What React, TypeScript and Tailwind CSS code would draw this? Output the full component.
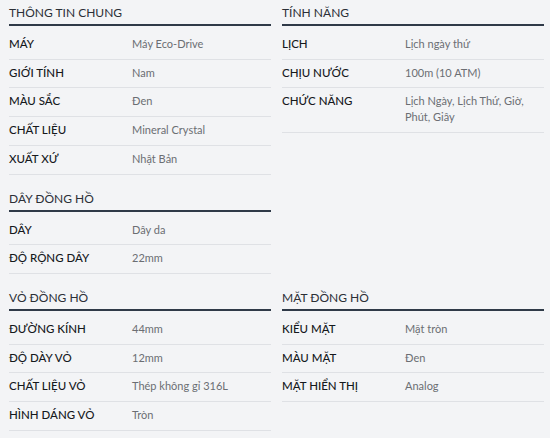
import React from "react";

type Row = { label: string; value: string };
type Section = { title: string; rows: Row[] };

const thongTin: Section = {
  title: "THÔNG TIN CHUNG",
  rows: [
    { label: "MÁY", value: "Máy Eco-Drive" },
    { label: "GIỚI TÍNH", value: "Nam" },
    { label: "MÀU SẮC", value: "Đen" },
    { label: "CHẤT LIỆU", value: "Mineral Crystal" },
    { label: "XUẤT XỨ", value: "Nhật Bản" },
  ],
};

const tinhNang: Section = {
  title: "TÍNH NĂNG",
  rows: [
    { label: "LỊCH", value: "Lịch ngày thứ" },
    { label: "CHỊU NƯỚC", value: "100m (10 ATM)" },
    { label: "CHỨC NĂNG", value: "Lịch Ngày, Lịch Thứ, Giờ, Phút, Giây" },
  ],
};

const dayDongHo: Section = {
  title: "DÂY ĐỒNG HỒ",
  rows: [
    { label: "DÂY", value: "Dây da" },
    { label: "ĐỘ RỘNG DÂY", value: "22mm" },
  ],
};

const voDongHo: Section = {
  title: "VỎ ĐỒNG HỒ",
  rows: [
    { label: "ĐƯỜNG KÍNH", value: "44mm" },
    { label: "ĐỘ DÀY VỎ", value: "12mm" },
    { label: "CHẤT LIỆU VỎ", value: "Thép không gỉ 316L" },
    { label: "HÌNH DÁNG VỎ", value: "Tròn" },
  ],
};

const matDongHo: Section = {
  title: "MẶT ĐỒNG HỒ",
  rows: [
    { label: "KIỂU MẶT", value: "Mặt tròn" },
    { label: "MÀU MẶT", value: "Đen" },
    { label: "MẶT HIỂN THỊ", value: "Analog" },
  ],
};

const SpecBlock = ({ section }: { section: Section }) => {
  return (
    <div>
      <h3 className="pt-[4px] pb-[2px] mb-[5px] text-[12px] leading-[18px] font-normal text-[#2b2f36] border-b-2 border-[#2f3a48]">
        {section.title}
      </h3>
      {section.rows.map((row) => (
        <div
          key={row.label}
          className="flex items-start pt-[5px] pb-[7px] border-b border-[#dfe1e5]"
        >
          <div className="w-[123px] shrink-0 text-[11.5px] leading-[15.7px] font-medium text-[#16191d]">
            {row.label}
          </div>
          <div className="flex-1 pr-4 text-[11px] leading-[15.7px] text-[#6b6e73]">
            {row.value}
          </div>
        </div>
      ))}
    </div>
  );
};

export default function App() {
  return (
    <div
      className="min-h-screen bg-[#f3f4f6] px-[9px]"
      style={{ fontFamily: "Lato, 'Noto Sans', sans-serif" }}
    >
      <div className="grid grid-cols-[262px_262px] gap-x-[11px] gap-y-[11px] items-start">
        <SpecBlock section={thongTin} />
        <SpecBlock section={tinhNang} />
        <SpecBlock section={dayDongHo} />
        <div />
        <SpecBlock section={voDongHo} />
        <SpecBlock section={matDongHo} />
      </div>
    </div>
  );
}
